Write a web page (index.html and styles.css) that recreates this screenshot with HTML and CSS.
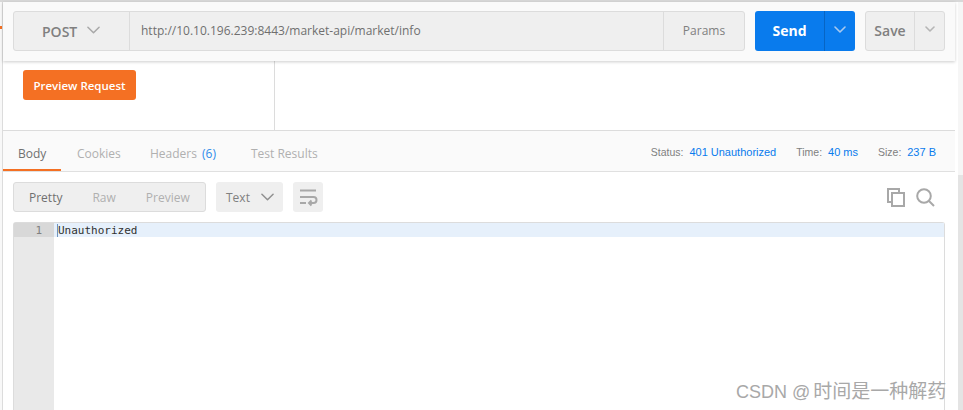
FILE: index.html
```html
<!DOCTYPE html>
<html lang="en">
<head>
<meta charset="utf-8">
<title>Postman</title>
<link rel="stylesheet" href="styles.css">
</head>
<body>
<div class="app">
  <div class="edge"><span class="edge-mark"></span></div>
  <main class="main">
    <header class="request-bar">
      <div class="url-group">
        <div class="method">POST
          <svg class="chev chev-method" viewBox="0 0 14 8"><path d="M1 1l6 6 6-6"/></svg>
        </div>
        <div class="url">http://10.10.196.239:8443/market-api/market/info</div>
        <div class="params">Params</div>
      </div>
      <div class="send">
        <span class="send-label">Send</span>
        <span class="send-arrow"><svg class="chev chev-send" viewBox="0 0 12 7"><path d="M1 1l5 5 5-5"/></svg></span>
      </div>
      <div class="save">
        <span class="save-label">Save</span>
        <span class="save-arrow"><svg class="chev chev-save" viewBox="0 0 10 6"><path d="M1 1l4 4 4-4"/></svg></span>
      </div>
    </header>
    <section class="script-pane">
      <div class="script-left"><button class="preview-btn">Preview Request</button></div>
      <div class="script-right"></div>
    </section>
    <nav class="tabs">
      <span class="tab tab-active">Body</span>
      <span class="tab tab-cookies">Cookies</span>
      <span class="tab tab-headers">Headers <b class="count">(6)</b></span>
      <span class="tab tab-tests">Test Results</span>
      <div class="stats">
        <span class="stat">Status: <b>401 Unauthorized</b></span>
        <span class="stat">Time: <b>40 ms</b></span>
        <span class="stat">Size: <b>237 B</b></span>
      </div>
    </nav>
    <div class="toolbar">
      <div class="modes">
        <span class="mode mode-active">Pretty</span>
        <span class="mode">Raw</span>
        <span class="mode">Preview</span>
      </div>
      <div class="format">Text
        <svg class="chev chev-format" viewBox="0 0 14 8"><path d="M1 1l6 6 6-6"/></svg>
      </div>
      <div class="wrap">
        <svg viewBox="0 0 16 16"><path d="M0 1.5h16M0 8h13.5a2.8 2.8 0 0 1 0 6H9M11.5 11.5L9 14l2.5 2.5M0 14h6"/></svg>
      </div>
      <div class="tools">
        <svg class="icon-copy" viewBox="0 0 18 19"><path d="M4 14H1V1h11v3M5 5h12v13H5z"/></svg>
        <svg class="icon-search" viewBox="0 0 19 19"><circle cx="8" cy="8" r="6.8"/><path d="M13 13l5 5"/></svg>
      </div>
    </div>
    <div class="editor">
      <div class="gutter"><div class="line-no">1</div></div>
      <div class="code"><div class="code-line"><span class="caret"></span>Unauthorized</div></div>
    </div>
  </main>
  <aside class="scroll"><div class="thumb"></div></aside>
</div>
<div class="watermark">CSDN @<span class="watermark-cjk">时间是一种解药</span></div>
</body>
</html>
```
FILE: styles.css
```css
* { box-sizing: border-box; }
html, body { margin: 0; height: 100%; overflow: hidden; background: #fff; }
body { font-family: "Open Sans", "Noto Sans", sans-serif; color: #808080; position: relative; }
.app { display: flex; width: 963px; height: 410px; border-top: 2px solid #d8d8d8; }
.edge { width: 3px; background: #f8f8f8; border-right: 1px solid #dcdcdc; flex: none; }
.edge-mark { display: block; height: 3px; width: 2px; margin-top: 24px; background: #f47023; }
.main { width: 952px; flex: none; display: flex; flex-direction: column; }
.request-bar { height: 59px; flex: none; display: flex; padding: 9px 0 0 10px; background: #fafafa; box-shadow: 0 1px 3px rgba(0,0,0,.2); position: relative; }
.url-group { width: 732px; height: 40px; display: flex; background: #efefef; border: 1px solid #dcdcdc; border-radius: 3px; }
.method { width: 116px; flex: none; display: flex; align-items: center; padding-left: 28px; gap: 10px; font-size: 14px; font-weight: 600; color: #808080; border-right: 1px solid #dcdcdc; }
.url { flex: 1; padding: 0 11px; line-height: 37px; font-size: 12px; color: #6f6f6f; }
.params { width: 81px; flex: none; border-left: 1px solid #dcdcdc; text-align: center; line-height: 38px; font-size: 12px; color: #808080; }
.send { width: 100px; height: 40px; margin-left: 10px; display: flex; background: #097bed; border-radius: 3px; color: #fff; }
.send-label { width: 69px; text-align: center; line-height: 40px; font-size: 14px; font-weight: 700; }
.send-arrow { flex: 1; border-left: 1px solid #0765c4; display: flex; align-items: center; justify-content: center; }
.save { width: 80px; height: 40px; margin-left: 10px; display: flex; background: #efefef; border: 1px solid #dcdcdc; border-radius: 3px; color: #808080; }
.save-label { width: 49px; border-right: 1px solid #dcdcdc; text-align: center; line-height: 38px; font-size: 14px; font-weight: 600; }
.save-arrow { flex: 1; display: flex; align-items: center; justify-content: center; }
.chev { fill: none; stroke-linecap: round; stroke-linejoin: round; stroke-width: 1.6; }
.chev-method { width: 13px; height: 8px; stroke: #a8a8a8; margin-top: -3px; }
.chev-send { width: 12px; height: 7px; stroke: #a9c9ee; margin-top: -4px; }
.chev-save { width: 10px; height: 6px; stroke: #b5b5b5; margin-top: -5px; }
.chev-format { width: 13px; height: 8px; stroke: #909090; margin-left: 3px; }
.script-pane { height: 70px; flex: none; display: flex; border-bottom: 1px solid #dcdcdc; }
.script-left { width: 272px; flex: none; padding: 9px 0 0 20px; border-right: 1px solid #dcdcdc; }
.script-right { flex: 1; }
.preview-btn { width: 113px; height: 30px; padding: 0; border: 0; border-radius: 3px; background: #f47023; color: #fff; font: 600 11.5px "Open Sans", sans-serif; }
.tabs { height: 41px; flex: none; display: flex; align-items: flex-start; background: #fafafa; border-bottom: 1px solid #e0e0e0; position: relative; font-size: 12px; }
.tab { height: 40px; line-height: 45px; color: #b0b0b0; white-space: nowrap; }
.tab-active { width: 58px; padding-left: 15px; color: #707070; border-bottom: 2px solid #f47023; }
.tab-cookies { margin-left: 16px; width: 73px; }
.tab-headers { width: 101px; }
.count { font-weight: 400; color: #2f8cea; margin-left: 2px; }
.stats { margin-left: auto; padding: 0 19px 0 0; display: flex; gap: 20px; line-height: 42px; font-family: "Liberation Sans", Arial, sans-serif; font-size: 10.5px; color: #808080; }
.stat b { font-size: 11px; font-weight: 400; color: #097bed; margin-left: 3px; }
.toolbar { height: 50px; flex: none; display: flex; padding: 10px 0 0 10px; }
.modes { width: 193px; height: 30px; display: flex; background: #efefef; border: 1px solid #dcdcdc; border-radius: 3px; align-items: center; font-size: 12px; padding-left: 15px; color: #b0b0b0; gap: 30px; }
.mode-active { color: #707070; }
.format { width: 67px; height: 30px; margin-left: 10px; display: flex; align-items: center; padding-left: 10px; gap: 8px; background: #efefef; border-radius: 3px; font-size: 12px; }
.wrap { width: 30px; height: 30px; margin-left: 10px; display: flex; align-items: center; justify-content: center; background: #efefef; border-radius: 3px; }
.wrap svg { width: 16px; height: 16px; fill: none; stroke: #a8a8a8; stroke-width: 2; overflow: visible; }
.tools { margin-left: auto; margin-right: 20px; display: flex; gap: 11px; padding-top: 6px; height: 24px; }
.tools svg { fill: none; stroke: #a8a8a8; stroke-width: 2; }
.icon-copy { width: 18px; height: 19px; }
.icon-search { width: 19px; height: 19px; }
.editor { flex: 1; min-height: 0; margin: 0 10px 0 10px; display: flex; border: 1px solid #dcdcdc; border-bottom: 0; border-radius: 3px 3px 0 0; background: #fff; }
.gutter { width: 40px; flex: none; background: #e9e9e9; }
.line-no { height: 14px; background: #d8d8d8; text-align: right; padding-right: 12px; font: 11px/15px "DejaVu Sans Mono", monospace; color: #808080; }
.code { flex: 1; }
.code-line { height: 14px; background: #e6f0fb; padding-left: 3px; font: 11px/15px "DejaVu Sans Mono", monospace; color: #303030; white-space: nowrap; }
.caret { display: inline-block; width: 1px; height: 13px; background: #6f93bd; vertical-align: top; margin-top: 1px; }
.scroll { flex: 1; margin-left: 3px; background: #f6f6f6; padding-top: 173px; }
.thumb { height: 100%; background: #e4e4e4; }
.watermark { position: absolute; left: 736px; top: 376px; font: 18px "Liberation Sans", "Noto Sans CJK SC", sans-serif; color: #a8a8a8; white-space: nowrap; }
.watermark-cjk { font-size: 19px; margin-left: 3px; }
```
